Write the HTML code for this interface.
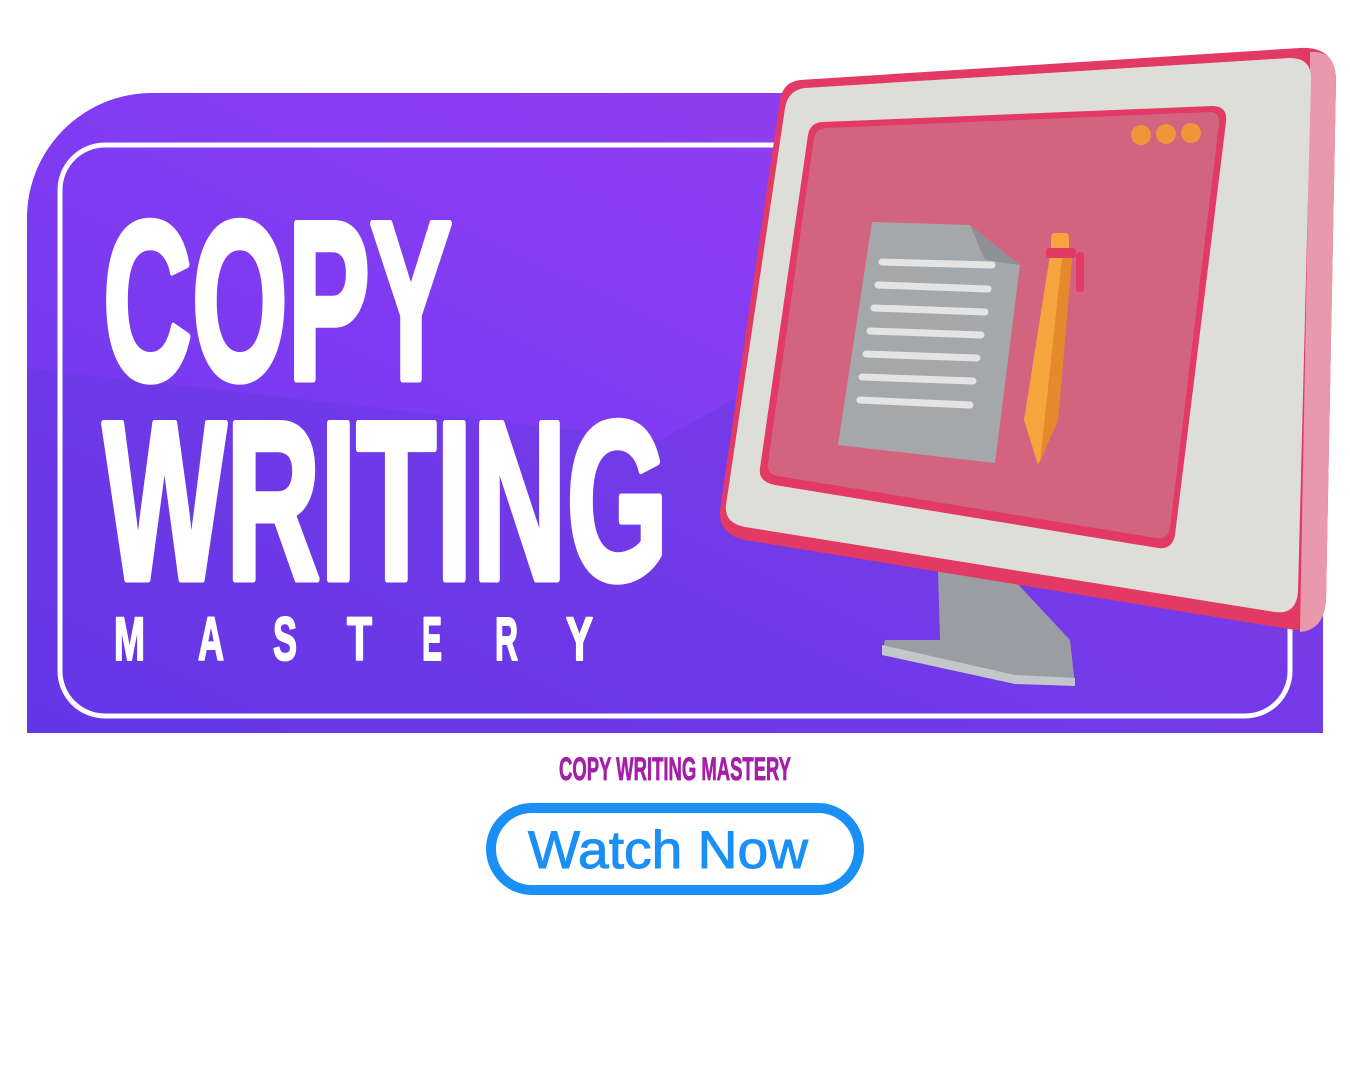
<!DOCTYPE html>
<html><head><meta charset="utf-8"><style>
html,body{margin:0;padding:0;background:#fff;width:1350px;height:1080px;overflow:hidden}
svg{display:block}
</style></head><body>
<svg width="1350" height="1080" viewBox="0 0 1350 1080" xmlns="http://www.w3.org/2000/svg">
<defs>
<linearGradient id="bg" x1="0" y1="1" x2="1" y2="0">
<stop offset="0" stop-color="#6736ee"/>
<stop offset="0.55" stop-color="#843cf2"/>
<stop offset="1" stop-color="#9c3ef0"/>
</linearGradient>
</defs>
<path d="M152 93 H1323 V733 H27 V218 A125 125 0 0 1 152 93 Z" fill="url(#bg)"/>
<polygon points="27,368 660,440 760,385 1323,430 1323,733 27,733" fill="#5e38d8" opacity="0.35"/>
<polygon points="1290,140 1323,140 1323,430 1290,425" fill="#d468e6"/>
<rect x="60" y="145" width="1230" height="571" rx="45" fill="none" stroke="#fff" stroke-width="5"/>

<g font-family="'Liberation Sans Narrow','Liberation Sans',sans-serif" font-weight="bold" fill="#fff" stroke="#fff" stroke-linejoin="round">
<text x="103" y="379" font-size="226" stroke-width="7" textLength="349" lengthAdjust="spacingAndGlyphs">COPY</text>
<text x="103" y="579" font-size="226" stroke-width="7" textLength="565" lengthAdjust="spacingAndGlyphs">WRITING</text>
<g font-size="61" stroke-width="2">
<text x="114" y="660" textLength="31" lengthAdjust="spacingAndGlyphs">M</text>
<text x="198" y="660" textLength="26" lengthAdjust="spacingAndGlyphs">A</text>
<text x="273" y="660" textLength="24" lengthAdjust="spacingAndGlyphs">S</text>
<text x="347" y="660" textLength="25" lengthAdjust="spacingAndGlyphs">T</text>
<text x="422" y="660" textLength="20" lengthAdjust="spacingAndGlyphs">E</text>
<text x="495" y="660" textLength="23" lengthAdjust="spacingAndGlyphs">R</text>
<text x="566" y="660" textLength="27" lengthAdjust="spacingAndGlyphs">Y</text>
</g>
</g>

<!-- monitor stand -->
<polygon points="938,570 1000,565 1070,640 1075,685 1015,682 882,652 885,640 940,640" fill="#9a9ea2"/>
<polygon points="882,645 1015,675 1075,678 1075,686 1015,684 882,655" fill="#c4c7ca"/>
<!-- monitor body -->
<path d="M800 80 L1300 48 Q1335 46 1336 80 L1326 600 Q1324 630 1295 630 L745 540 Q718 534 720 510 L780 100 Q783 82 800 80 Z" fill="#e23a64"/>
<path d="M1310 52 Q1336 50 1336 80 L1326 600 Q1324 630 1300 632 L1310 90 Z" fill="#e899ab"/>
<path d="M805 88 L1290 58 Q1312 58 1311 80 L1298 592 Q1296 615 1275 612 L745 527 Q724 523 726 505 L785 108 Q788 90 805 88 Z" fill="#deded9"/>
<path d="M822 122 L1212 106 Q1228 106 1226 122 L1175 535 Q1172 550 1158 548 L775 485 Q758 482 760 468 L808 135 Q810 123 822 122 Z" fill="#e23a64"/>
<path d="M826 128 L1210 112 Q1220 112 1219 124 L1170 528 Q1168 540 1156 538 L778 476 Q766 474 768 463 L814 138 Q816 129 826 128 Z" fill="#d2647f"/>
<circle cx="1141" cy="135" r="10" fill="#f1953a"/>
<circle cx="1166" cy="134" r="10" fill="#f1953a"/>
<circle cx="1191" cy="133" r="10" fill="#f1953a"/>
<!-- paper -->
<polygon points="872,222 970,225 1020,265 995,463 838,445" fill="#a5a8ab"/>
<polygon points="970,225 1020,265 985,260" fill="#8d9094"/>
<g stroke="#e4e4e4" stroke-width="7" stroke-linecap="round">
<line x1="882" y1="262" x2="992" y2="265"/>
<line x1="878" y1="285" x2="988" y2="289"/>
<line x1="874" y1="308" x2="985" y2="312"/>
<line x1="870" y1="331" x2="981" y2="335"/>
<line x1="866" y1="354" x2="977" y2="358"/>
<line x1="862" y1="377" x2="973" y2="381"/>
<line x1="860" y1="400" x2="970" y2="405"/>
</g>
<!-- pen -->
<polygon points="1050,255 1072,257 1058,420 1038,465 1024,420" fill="#f5a43e"/>
<polygon points="1062,258 1072,257 1058,420 1040,462" fill="#e48a2c"/>
<rect x="1051" y="233" width="18" height="18" rx="4" fill="#f5a43e"/>
<rect x="1046" y="248" width="30" height="10" rx="3" fill="#e23a64"/>
<rect x="1076" y="252" width="8" height="40" rx="3" fill="#e23a64"/>

<!-- bottom text -->
<text x="559" y="780" font-family="'Liberation Sans Narrow','Liberation Sans',sans-serif" font-weight="bold" font-size="32" fill="#a41fa8" stroke="#a41fa8" stroke-width="0.8" textLength="232" lengthAdjust="spacingAndGlyphs">COPY WRITING MASTERY</text>
<rect x="491" y="808" width="368" height="82" rx="41" fill="#fff" stroke="#1a8ff5" stroke-width="10"/>
<text x="528" y="868" font-family="'Liberation Sans',sans-serif" font-size="53" fill="#1a8ff5" stroke="#1a8ff5" stroke-width="1" textLength="280" lengthAdjust="spacingAndGlyphs">Watch Now</text>
</svg>
</body></html>
